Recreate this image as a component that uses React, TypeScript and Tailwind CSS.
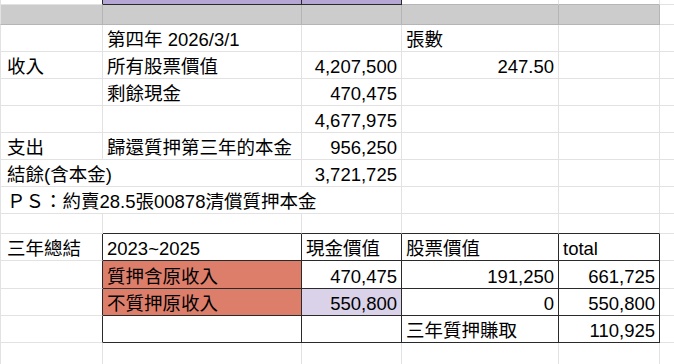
import type { ReactNode } from "react";

type CellProps = {
  w: string;
  r?: "g" | "k" | "d";
  b?: "g" | "k" | "d";
  right?: boolean;
  bg?: string;
  first?: boolean;
  children?: ReactNode;
};

function Cell({ w, r = "g", b = "g", right, bg = "", first, children }: CellProps) {
  const rc = r === "k" ? "border-r-[#2a2a2a]" : r === "d" ? "border-r-[#b5b5b5]" : "border-r-[#e2e2e2]";
  const bc = b === "k" ? "border-b-[#2a2a2a]" : b === "d" ? "border-b-[#b5b5b5]" : "border-b-[#e2e2e2]";
  return (
    <div
      className={`${w} ${rc} ${bc} ${bg} ${right ? "justify-end" : ""} ${
        first ? "pl-[6px] border-l border-l-[#e2e2e2]" : "pl-[4px]"
      } shrink-0 h-full flex items-end pr-[4px] pb-[1px] leading-[20px] whitespace-nowrap overflow-hidden border-r border-b`}
    >
      {children}
    </div>
  );
}

function Row({ h, children }: { h: string; children: ReactNode }) {
  return <div className={`flex ${h}`}>{children}</div>;
}

const A = "w-[103px]";
const B = "w-[199px]";
const C = "w-[100px]";
const D = "w-[157px]";
const E = "w-[101px]";
const F = "w-[20px]";

export default function App() {
  return (
    <div className="w-[674px] h-[364px] overflow-hidden bg-white text-black text-[18.5px] font-['Liberation_Sans','Noto_Sans_CJK_TC',sans-serif]">
      {/* top purple strip */}
      <Row h="h-[5px]">
        <Cell w={A} first r="k" />
        <Cell w={B} r="k" b="k" bg="bg-[#b4a7d6]" />
        <Cell w={C} r="k" b="k" bg="bg-[#b4a7d6]" />
        <Cell w={D} b="d" />
        <Cell w={E} b="d" />
        <Cell w={F} />
      </Row>
      {/* gray separator row */}
      <Row h="h-[20px]">
        <Cell w={A} first r="d" b="d" bg="bg-[#cccccc]" />
        <Cell w={B} r="d" b="d" bg="bg-[#cccccc]" />
        <Cell w={C} r="d" b="d" bg="bg-[#cccccc]" />
        <Cell w={D} r="d" b="d" bg="bg-[#cccccc]" />
        <Cell w={E} r="d" b="d" bg="bg-[#cccccc]" />
        <Cell w={F} />
      </Row>
      <Row h="h-[27px]">
        <Cell w={A} first />
        <Cell w={B}>第四年 2026/3/1</Cell>
        <Cell w={C} />
        <Cell w={D}>張數</Cell>
        <Cell w={E} />
        <Cell w={F} />
      </Row>
      <Row h="h-[27px]">
        <Cell w={A} first>收入</Cell>
        <Cell w={B}>所有股票價值</Cell>
        <Cell w={C} right>4,207,500</Cell>
        <Cell w={D} right>247.50</Cell>
        <Cell w={E} />
        <Cell w={F} />
      </Row>
      <Row h="h-[27px]">
        <Cell w={A} first />
        <Cell w={B}>剩餘現金</Cell>
        <Cell w={C} right>470,475</Cell>
        <Cell w={D} />
        <Cell w={E} />
        <Cell w={F} />
      </Row>
      <Row h="h-[27px]">
        <Cell w={A} first />
        <Cell w={B} />
        <Cell w={C} right>4,677,975</Cell>
        <Cell w={D} />
        <Cell w={E} />
        <Cell w={F} />
      </Row>
      <Row h="h-[27px]">
        <Cell w={A} first>支出</Cell>
        <Cell w={B}>歸還質押第三年的本金</Cell>
        <Cell w={C} right>956,250</Cell>
        <Cell w={D} />
        <Cell w={E} />
        <Cell w={F} />
      </Row>
      <Row h="h-[27px]">
        <Cell w="w-[302px]" first>結餘(含本金)</Cell>
        <Cell w={C} right>3,721,725</Cell>
        <Cell w={D} />
        <Cell w={E} />
        <Cell w={F} />
      </Row>
      <Row h="h-[27px]">
        <Cell w="w-[402px]" first>ＰＳ：約賣28.5張00878清償質押本金</Cell>
        <Cell w={D} />
        <Cell w={E} />
        <Cell w={F} />
      </Row>
      <Row h="h-[20px]">
        <Cell w={A} first />
        <Cell w={B} b="k" />
        <Cell w={C} b="k" />
        <Cell w={D} b="k" />
        <Cell w={E} b="k" />
        <Cell w={F} />
      </Row>
      {/* summary table */}
      <Row h="h-[27px]">
        <Cell w={A} first r="k">三年總結</Cell>
        <Cell w={B} r="k" b="k">2023~2025</Cell>
        <Cell w={C} r="k" b="k">現金價值</Cell>
        <Cell w={D} r="k" b="k">股票價值</Cell>
        <Cell w={E} r="k" b="k">total</Cell>
        <Cell w={F} />
      </Row>
      <Row h="h-[28px]">
        <Cell w={A} first r="k" />
        <Cell w={B} r="k" b="k" bg="bg-[#dd7e6b]">質押含原收入</Cell>
        <Cell w={C} r="k" b="k" right>470,475</Cell>
        <Cell w={D} r="k" b="k" right>191,250</Cell>
        <Cell w={E} r="k" b="k" right>661,725</Cell>
        <Cell w={F} />
      </Row>
      <Row h="h-[27px]">
        <Cell w={A} first r="k" />
        <Cell w={B} r="k" b="k" bg="bg-[#dd7e6b]">不質押原收入</Cell>
        <Cell w={C} r="k" b="k" right bg="bg-[#d9d2e9]">550,800</Cell>
        <Cell w={D} r="k" b="k" right>0</Cell>
        <Cell w={E} r="k" b="k" right>550,800</Cell>
        <Cell w={F} />
      </Row>
      <Row h="h-[27px]">
        <Cell w={A} first r="k" />
        <Cell w={B} r="k" b="k" />
        <Cell w={C} r="k" b="k" />
        <Cell w={D} r="k" b="k">三年質押賺取</Cell>
        <Cell w={E} r="k" b="k" right>110,925</Cell>
        <Cell w={F} />
      </Row>
      <Row h="h-[27px]">
        <Cell w={A} first />
        <Cell w={B} />
        <Cell w={C} />
        <Cell w={D} />
        <Cell w={E} />
        <Cell w={F} />
      </Row>
    </div>
  );
}
